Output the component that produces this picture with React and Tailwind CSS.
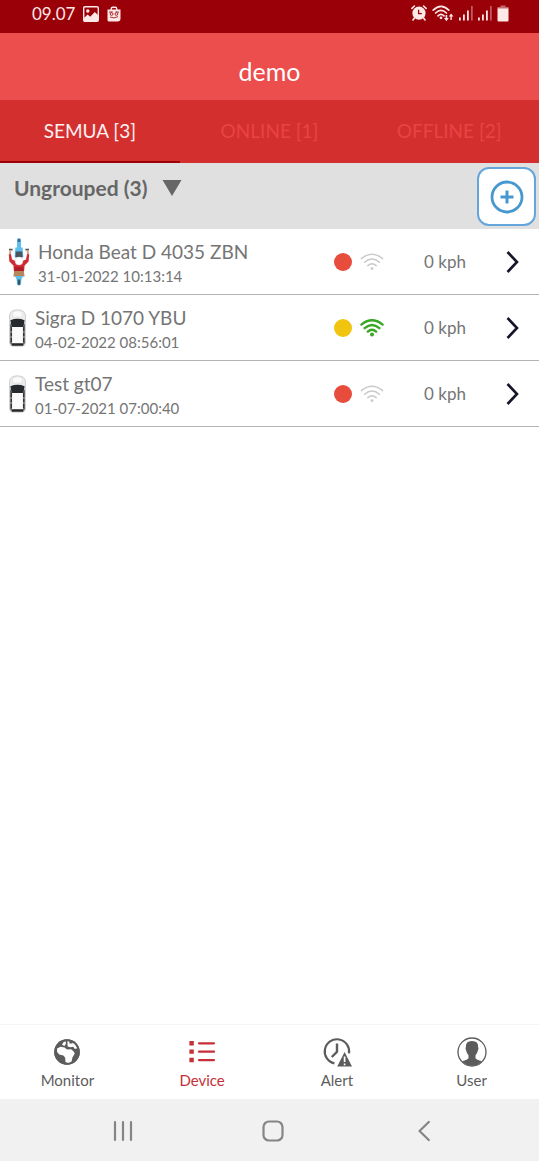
import React, { useState } from 'react';

const devices = [
    { id: 1, name: 'Honda Beat D 4035 ZBN', time: '31-01-2022 10:13:14', type: 'bike', status: 'off', speed: 0 },
    { id: 2, name: 'Sigra D 1070 YBU', time: '04-02-2022 08:56:01', type: 'car', status: 'idle', speed: 0 },
    { id: 3, name: 'Test gt07', time: '01-07-2021 07:00:40', type: 'car', status: 'off', speed: 0 },
];

const tabs = [
    { id: 'all', label: 'SEMUA [3]' },
    { id: 'online', label: 'ONLINE [1]' },
    { id: 'offline', label: 'OFFLINE [2]' },
];

/* Status bar icons */
const PictureIcon = () => (
    <svg viewBox="0 0 16 16" className="w-4 h-4" aria-hidden="true">
        <rect x="0.7" y="0.7" width="14.6" height="14.6" rx="1.2" fill="none" stroke="currentColor" strokeWidth="1.4" />
        <circle cx="4.8" cy="5" r="1.7" fill="currentColor" />
        <path d="M1 15V12L4.6 8.4L7.2 10.8L11.8 6L15 9V15Z" fill="currentColor" />
    </svg>
);

const BagIcon = () => (
    <svg viewBox="0 0 14 16" className="w-3.5 h-4" aria-hidden="true">
        <path d="M4.3 4V2.6Q4.3 1.2 5.7 1.2H8.3Q9.7 1.2 9.7 2.6V4" fill="none" stroke="currentColor" strokeWidth="1.4" />
        <path d="M0.5 3.5H13.5V12.5Q13.5 15.5 10.5 15.5H2Q0.5 15.5 0.5 14Z" fill="currentColor" />
        <g fill="none" stroke="#9a0007" strokeWidth="0.8">
            <circle cx="4.6" cy="8" r="1.4" />
            <circle cx="9.4" cy="8" r="1.4" />
            <path d="M2 6.2L5.5 5.8M8.5 5.8L12 6.2M3 11Q7 13 11 10.6" />
        </g>
    </svg>
);

const AlarmIcon = () => (
    <svg viewBox="0 0 16 16" className="w-4 h-4" aria-hidden="true">
        <circle cx="8" cy="8.2" r="6.6" fill="currentColor" />
        <g stroke="currentColor" strokeWidth="1.6" strokeLinecap="round" fill="none">
            <path d="M0.9 3.4L3.4 1M15.1 3.4L12.6 1M3.4 13L2 15M12.6 13L14 15" />
        </g>
        <path d="M7.6 4.8V8.7H10.8" fill="none" stroke="#9a0007" strokeWidth="1.3" />
    </svg>
);

const StatusWifiIcon = () => (
    <svg viewBox="0 0 22 17" className="w-[22px] h-[17px]" aria-hidden="true">
        <g fill="none" stroke="currentColor" strokeWidth="1.7" strokeLinecap="round">
            <path d="M1.2 5.2Q9 -2.6 16.8 5.2" />
            <path d="M3.6 8Q9 2.8 14.4 8" />
            <path d="M6 10.8Q9 8 12 10.8" />
        </g>
        <circle cx="9" cy="12.8" r="1.4" fill="currentColor" />
        <path d="M13.6 10V13H12L14.4 16.3L16.8 13H15.2V10Z" fill="currentColor" />
        <path d="M18.4 15V11.6H16.8L19.1 8.4L21.4 11.6H19.8V15Z" fill="currentColor" />
    </svg>
);

const SignalIcon = () => (
    <svg viewBox="0 0 14 16" className="w-3.5 h-4" aria-hidden="true">
        <path d="M0 12.5H1.8V15.5H0ZM4 9.5H5.8V15.5H4ZM8 5.5H9.8V15.5H8Z" fill="currentColor" />
        <path d="M12.2 1H13.6V15.5H12.2Z" fill="currentColor" opacity="0.5" />
    </svg>
);

const BatteryIcon = () => (
    <svg viewBox="0 0 12 17" className="w-3 h-[17px]" aria-hidden="true">
        <path d="M3.5 0.5H8.5V2H11.5V4H0.5V2H3.5Z" fill="currentColor" opacity="0.45" />
        <path d="M0.5 3.6H11.5V15.6Q11.5 16.6 10.5 16.6H1.5Q0.5 16.6 0.5 15.6Z" fill="currentColor" />
    </svg>
);

/* Device list icons */
const BikeIcon = () => (
    <svg viewBox="0 0 22 48" className="w-[22px] h-12" aria-hidden="true">
        <path d="M9 1.8Q11 -0.6 13 1.8V10H9Z" fill="#5cc0ea" />
        <path d="M9.6 0.6H12.4V4H9.6Z" fill="#3f6f9f" />
        <path d="M7.4 9.4H14.6L15.4 19H6.6Z" fill="#5cc0ea" />
        <path d="M7.8 13.6H14.2L14.6 19.5H7.4Z" fill="#4a5560" />
        <path d="M1 11.6H4.6M17.4 11.6H21" stroke="#555" strokeWidth="1.6" />
        <path d="M2.4 12.2L1.8 17M19.6 12.2L20.2 17" stroke="#d9a58c" strokeWidth="2" />
        <path d="M0.8 16.4L3 16.2L4 21.4L7.6 23H14.4L18 21.4L19 16.2L21.2 16.4L20.6 23.6L16.6 27.4L16 34H6L5.4 27.4L1.4 23.6Z" fill="#d02a34" />
        <path d="M6.8 29H15.2L15.6 34H6.4Z" fill="#b01c26" />
        <circle cx="11" cy="23" r="3.9" fill="#fff" stroke="#dcdcdc" strokeWidth="0.5" />
        <path d="M6.2 33H15.8L16.6 38.4H5.4Z" fill="#b3885a" />
        <path d="M7 38H15L13.4 41.5L13 46Q11 49.2 9 46L8.6 41.5Z" fill="#5cc0ea" />
        <path d="M9.7 41.5H12.3V46.8H9.7Z" fill="#385468" />
    </svg>
);

const CarIcon = () => (
    <svg viewBox="0 0 19 38" className="w-[19px] h-[38px]" aria-hidden="true">
        <path d="M1.6 6Q2.4 1 9.5 0.8Q16.6 1 17.4 6V34Q17.4 37 14 37.2H5Q1.6 37 1.6 34Z" fill="#ececec" stroke="#c4c4c4" strokeWidth="0.8" />
        <path d="M4.5 3Q9.5 0.5 14.5 3L14 8H5Z" fill="#fafafa" stroke="#d8d8d8" strokeWidth="0.5" />
        <path d="M2.4 11.2Q9.5 8.4 16.6 11.2L15.4 18H3.6Z" fill="#26292d" />
        <path d="M2.3 14L4.2 19V33L2.3 35ZM16.7 14L14.8 19V33L16.7 35Z" fill="#303338" />
        <path d="M2.2 23H4.2M2.2 28H4.2M14.8 23H16.8M14.8 28H16.8" stroke="#ddd" strokeWidth="0.8" />
        <path d="M4.2 18H14.8V34H4.2Z" fill="#fafafa" />
        <path d="M3 34.2H16L15.2 36.8H3.8Z" fill="#25282b" />
    </svg>
);

const WifiIcon = ({ online }) => (
    <svg viewBox="0 0 24 18" className={`w-6 h-[18px] ${online ? 'text-[#37a822]' : 'text-[#c9c9c9]'}`} aria-hidden="true">
        <g fill="none" stroke="currentColor" strokeWidth={online ? 2.4 : 1.5} strokeLinecap="round">
            <path d="M1.4 5.6Q12 -3.2 22.6 5.6" />
            <path d="M4.6 9.2Q12 2.8 19.4 9.2" />
            <path d="M7.8 12.6Q12 8.8 16.2 12.6" />
        </g>
        <circle cx="12" cy="15.6" r={online ? 2 : 1.4} fill="currentColor" />
    </svg>
);

/* Bottom navigation icons */
const GlobeIcon = () => (
    <svg viewBox="0 0 30 30" className="w-[30px] h-[30px]" aria-hidden="true">
        <circle cx="15" cy="15" r="12.8" fill="currentColor" />
        <path d="M5 11.4L8.6 9.8L12.6 10.6L15 12.4L19.2 12.2L21.6 14.4L22.8 16.6L20.4 20.4L19.6 24.6L16.6 26.6L13.4 25L13.2 20.8L11.4 18.4L7.2 17.4L5 14.8Z" fill="#fff" />
        <path d="M10 7.8L11.8 4.8L13.8 4V7L12.4 9Z" fill="#fff" />
        <path d="M15.4 3.8H17.4V6.6H20.4L21 4.8L23.4 7.2L25.4 11.2L22.8 12L21.2 9.8L18.4 10.2L15.6 9.4Z" fill="#fff" />
        <circle cx="15" cy="15" r="11.8" fill="none" stroke="currentColor" strokeWidth="2" />
    </svg>
);

const ListIcon = () => (
    <svg viewBox="0 0 30 30" className="w-[30px] h-[30px]" aria-hidden="true">
        <path d="M2.4 4H6.8V8.4H2.4ZM2.4 12.4H6.8V16.8H2.4ZM2.4 20.8H6.8V25.2H2.4Z" fill="currentColor" />
        <path d="M12 6.3H27M12 14.7H27M12 23.1H27" stroke="currentColor" strokeWidth="2.2" strokeLinecap="round" />
    </svg>
);

const AlertIcon = () => (
    <svg viewBox="0 0 30 30" className="w-[30px] h-[30px]" aria-hidden="true">
        <path d="M12.4 26.4A12.2 12.2 0 1 1 27 16.4" fill="none" stroke="currentColor" strokeWidth="2.2" />
        <path d="M15 6.5V14.8L9.8 20" fill="none" stroke="currentColor" strokeWidth="2.4" />
        <path d="M22.6 15L30 29.6H15.2Z" fill="currentColor" />
        <path d="M22.6 19.5V25M22.6 26.4V28.2" stroke="#fff" strokeWidth="1.7" />
    </svg>
);

const UserIcon = () => (
    <svg viewBox="0 0 30 30" className="w-[30px] h-[30px]" aria-hidden="true">
        <circle cx="15" cy="15" r="14" fill="#fff" stroke="currentColor" strokeWidth="1.3" />
        <path d="M15 4Q21.4 3.8 21.2 10.2Q21.8 11.2 21.1 13Q20.2 16.6 18.5 18.2V21.2Q19.4 22.6 25 24.2Q20.9 28.8 15 28.8Q9.1 28.8 5 24.2Q10.6 22.6 11.5 21.2V18.2Q9.8 16.6 8.9 13Q8.2 11.2 8.8 10.2Q8.6 3.8 15 4Z" fill="currentColor" />
    </svg>
);

const navItems = [
    { id: 'monitor', label: 'Monitor', Icon: GlobeIcon },
    { id: 'device', label: 'Device', Icon: ListIcon },
    { id: 'alert', label: 'Alert', Icon: AlertIcon },
    { id: 'user', label: 'User', Icon: UserIcon },
];

const StatusBar = () => (
    <div className="flex items-start justify-between bg-[#9a0007] text-[#fde8e8] h-[33px] pl-8 pr-[30px] pt-1">
        <div className="flex items-center gap-2">
            <span className="text-[17px] leading-5">09.07</span>
            <PictureIcon />
            <BagIcon />
        </div>
        <div className="flex items-center gap-[5px] h-[18px]">
            <AlarmIcon />
            <StatusWifiIcon />
            <SignalIcon />
            <SignalIcon />
            <BatteryIcon />
        </div>
    </div>
);

const DeviceRow = ({ device }) => (
    <li className="flex items-center h-[66px] border-b border-[#b4b4b4] pl-2 pr-5">
        {device.type === 'bike' ? <BikeIcon /> : <CarIcon />}
        <div className="flex-1 min-w-0 ml-2 pt-1">
            <p className="text-[19px] leading-6">{device.name}</p>
            <p className="text-[15px] leading-6">{device.time}</p>
        </div>
        <span className={`w-[18px] h-[18px] rounded-full shrink-0 ${device.status === 'idle' ? 'bg-[#f1c40f]' : 'bg-[#e74c3c]'}`} />
        <div className="ml-2 shrink-0"><WifiIcon online={device.status === 'idle'} /></div>
        <span className="w-[82px] shrink-0 text-right text-[17px]">{device.speed} kph</span>
        <button aria-label={`Open ${device.name}`} className="ml-10 shrink-0 text-[#16162a]">
            <svg viewBox="0 0 13 24" className="w-[13px] h-6" fill="none" stroke="currentColor" strokeWidth="2.6" aria-hidden="true">
                <path d="M1.5 2L11 12L1.5 22" />
            </svg>
        </button>
    </li>
);

const App = () => {
    const [activeTab, setActiveTab] = useState('all');
    const [activeNav, setActiveNav] = useState('device');
    const [open, setOpen] = useState(true);

    const visible = devices.filter((d) => {
        if (activeTab === 'online') return d.status === 'idle';
        if (activeTab === 'offline') return d.status === 'off';
        return true;
    });

    return (
        <div className="min-h-screen flex flex-col bg-white text-[#757575] font-['Lato','Noto_Sans',sans-serif]">
            <StatusBar />

            <header className="flex items-center justify-center h-[67px] bg-[#ec4d4d] pt-2">
                <h1 className="text-[25px] leading-8 text-white">demo</h1>
            </header>

            {/* Filter tabs */}
            <div role="tablist" className="grid grid-cols-3 h-[63px] bg-[#d32f2f]">
                {tabs.map((tab) => (
                    <button
                        key={tab.id}
                        role="tab"
                        aria-selected={activeTab === tab.id}
                        onClick={() => setActiveTab(tab.id)}
                        className={`border-b-2 pt-0.5 text-[19px] ${activeTab === tab.id ? 'border-[#9a0007] text-[#fff0f0]' : 'border-transparent text-[#ea4343]'}`}
                    >
                        {tab.label}
                    </button>
                ))}
            </div>

            {/* Group header */}
            <div className="flex items-start justify-between h-[66px] bg-[#e0e0e0] pl-3.5 pr-[3px]">
                <button
                    aria-expanded={open}
                    onClick={() => setOpen(!open)}
                    className="flex items-center gap-3.5 mt-[13px] text-[21px] leading-6 font-bold text-[#666]"
                >
                    Ungrouped (3)
                    <svg viewBox="0 0 20 16" className="w-5 h-4" aria-hidden="true"><path d="M0.5 0H19.5L10 16Z" fill="currentColor" /></svg>
                </button>
                <button aria-label="Add device" className="flex items-center justify-center w-[59px] h-[59px] mt-1 rounded-xl border-2 border-[#64a5dc] bg-white text-[#4797d0]">
                    <svg viewBox="0 0 34 34" className="w-[34px] h-[34px]" fill="none" stroke="currentColor" aria-hidden="true">
                        <circle cx="17" cy="17" r="15" strokeWidth="2.8" />
                        <path d="M17 10.5V23.5M10.5 17H23.5" strokeWidth="3" />
                    </svg>
                </button>
            </div>

            <main className="flex-1">
                {open && (
                    <ul>
                        {visible.map((device) => <DeviceRow key={device.id} device={device} />)}
                    </ul>
                )}
            </main>

            <nav className="grid grid-cols-4 h-[75px] border-t border-[#f4f4f4]">
                {navItems.map(({ id, label, Icon }) => (
                    <button
                        key={id}
                        onClick={() => setActiveNav(id)}
                        className={`flex flex-col items-center pt-3 gap-[3px] text-[15px] leading-5 ${activeNav === id ? 'text-[#c62f37]' : 'text-[#5c5c5c]'}`}
                    >
                        <Icon />
                        {label}
                    </button>
                ))}
            </nav>

            {/* System buttons */}
            <div className="grid grid-cols-3 h-[62px] bg-[#f1f1f1] pl-12 pr-10 pt-0.5 text-[#858585]">
                <button aria-label="Recent apps" className="flex items-center justify-center">
                    <svg viewBox="0 0 20 22" className="w-5 h-[22px]" stroke="currentColor" strokeWidth="2.2" strokeLinecap="round" aria-hidden="true"><path d="M2 2V20M10 2V20M18 2V20" /></svg>
                </button>
                <button aria-label="Home" className="flex items-center justify-center">
                    <svg viewBox="0 0 22 22" className="w-[22px] h-[22px]" fill="none" stroke="currentColor" strokeWidth="2.2" aria-hidden="true"><rect x="1.5" y="1.5" width="19" height="19" rx="5.5" /></svg>
                </button>
                <button aria-label="Back" className="flex items-center justify-center">
                    <svg viewBox="0 0 12 22" className="w-3 h-[22px]" fill="none" stroke="currentColor" strokeWidth="2.2" strokeLinecap="round" strokeLinejoin="round" aria-hidden="true"><path d="M10.8 2L1.5 11L10.8 20" /></svg>
                </button>
            </div>
        </div>
    );
};

export default App;
